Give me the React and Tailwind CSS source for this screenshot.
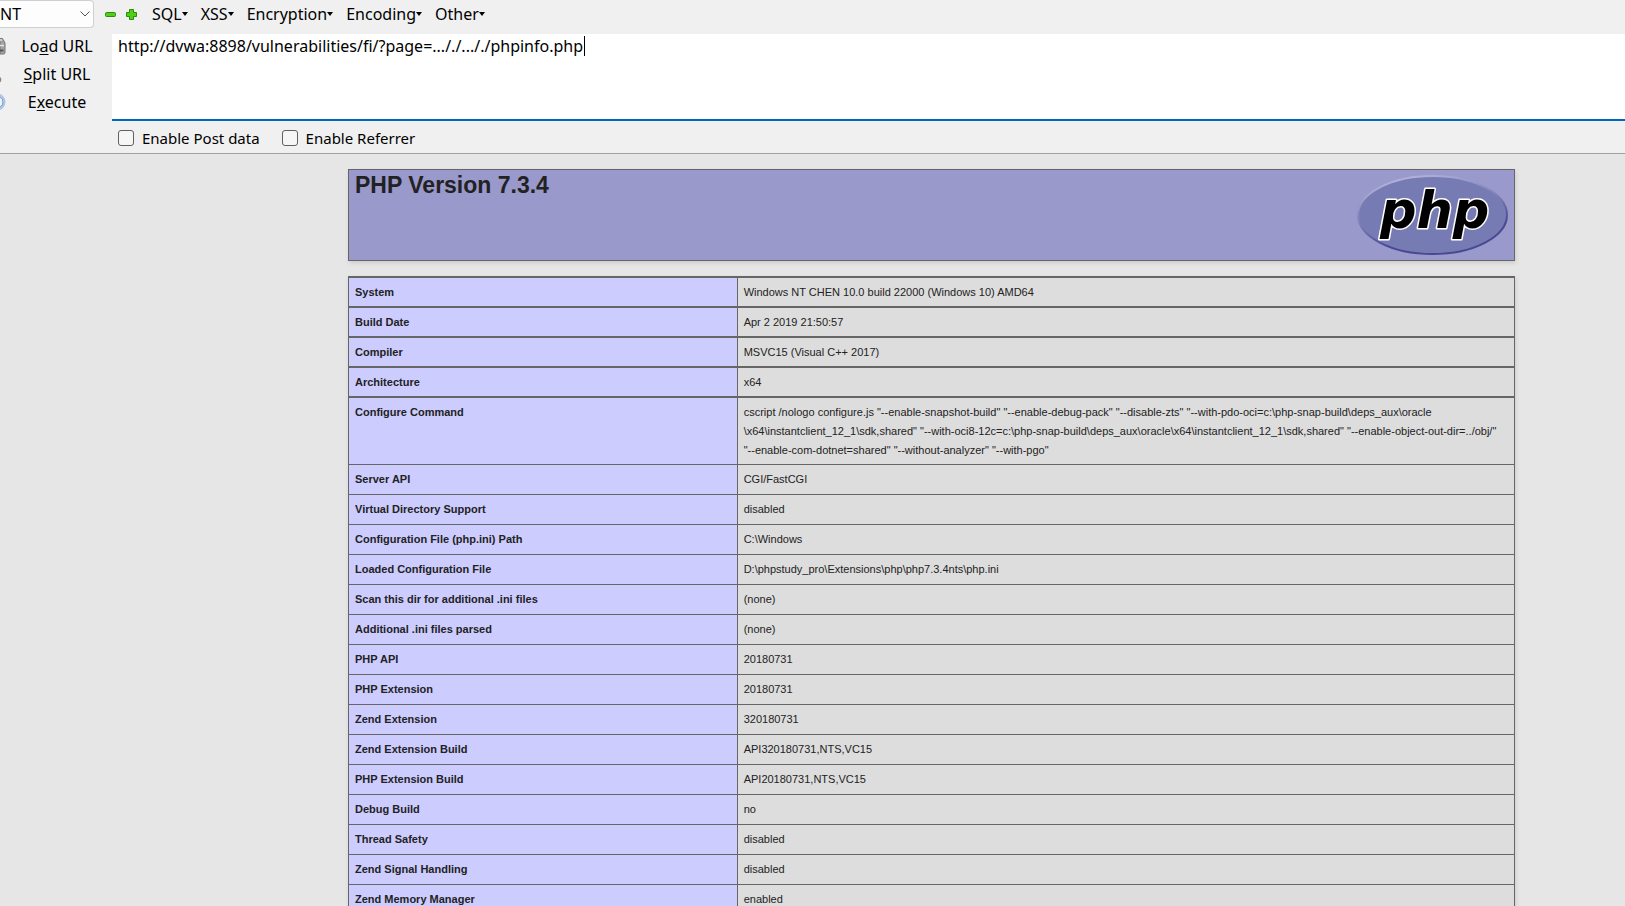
import clsx from "clsx";

const menus = ["SQL", "XSS", "Encryption", "Encoding", "Other"];

const rows = [
  ["System", "Windows NT CHEN 10.0 build 22000 (Windows 10) AMD64"],
  ["Build Date", "Apr 2 2019 21:50:57"],
  ["Compiler", "MSVC15 (Visual C++ 2017)"],
  ["Architecture", "x64"],
  [
    "Configure Command",
    'cscript /nologo configure.js "--enable-snapshot-build" "--enable-debug-pack" "--disable-zts" "--with-pdo-oci=c:\\php-snap-build\\deps_aux\\oracle\n\\x64\\instantclient_12_1\\sdk,shared" "--with-oci8-12c=c:\\php-snap-build\\deps_aux\\oracle\\x64\\instantclient_12_1\\sdk,shared" "--enable-object-out-dir=../obj/"\n"--enable-com-dotnet=shared" "--without-analyzer" "--with-pgo"',
  ],
  ["Server API", "CGI/FastCGI"],
  ["Virtual Directory Support", "disabled"],
  ["Configuration File (php.ini) Path", "C:\\Windows"],
  ["Loaded Configuration File", "D:\\phpstudy_pro\\Extensions\\php\\php7.3.4nts\\php.ini"],
  ["Scan this dir for additional .ini files", "(none)"],
  ["Additional .ini files parsed", "(none)"],
  ["PHP API", "20180731"],
  ["PHP Extension", "20180731"],
  ["Zend Extension", "320180731"],
  ["Zend Extension Build", "API320180731,NTS,VC15"],
  ["PHP Extension Build", "API20180731,NTS,VC15"],
  ["Debug Build", "no"],
  ["Thread Safety", "disabled"],
  ["Zend Signal Handling", "disabled"],
  ["Zend Memory Manager", "enabled"],
];

function PhpLogo() {
  return (
    <svg width="151" height="80" viewBox="0 0 151 80" role="img" aria-label="PHP logo" className="shrink-0">
      <defs>
        <linearGradient id="rim" x1="0.3" y1="0" x2="0.7" y2="1">
          <stop offset="0" stopColor="#b4b4dc" />
          <stop offset="0.45" stopColor="#7a7db5" />
          <stop offset="0.75" stopColor="#484893" />
        </linearGradient>
      </defs>
      <ellipse cx="75.5" cy="40" rx="74.5" ry="39" fill="#777bb3" stroke="url(#rim)" strokeWidth="2" />
      <text
        x="23"
        y="53"
        fontFamily="DejaVu Sans, sans-serif"
        fontWeight="bold"
        fontStyle="italic"
        fontSize="51"
        fill="#000"
        stroke="#fff"
        strokeWidth="3"
        strokeLinejoin="round"
        paintOrder="stroke"
      >
        php
      </text>
    </svg>
  );
}

function ActionButton({ icon, before, hotkey, after }) {
  return (
    <button className="flex h-7 w-28 items-center">
      <span className="w-3 shrink-0">{icon}</span>
      <span className="flex-1 pr-[10px] text-center">
        {before}
        <u className="underline-offset-2">{hotkey}</u>
        {after}
      </span>
    </button>
  );
}

function HackBar() {
  return (
    <header className="border-b border-[#a0a0a0] bg-[#f0f0f0] font-['Noto_Sans',sans-serif] text-[16px] leading-6 text-black">
      <div className="flex h-8 items-start">
        <div className="relative">
          <select aria-label="Toolbar type" className="h-7 w-[94px] appearance-none rounded-r-sm border border-l-0 border-[#d0d0d0] bg-[#fdfdfd]">
            <option>NT</option>
          </select>
          <svg width="10" height="6" viewBox="0 0 10 6" className="pointer-events-none absolute top-[11px] right-1" fill="none" stroke="#555">
            <path d="M.5.5 5 5 9.5.5" />
          </svg>
        </div>
        <div className="flex h-7 items-center gap-2 pl-[10px]">
          <button aria-label="Remove">
            <svg width="13" height="13" viewBox="0 0 13 13">
              <rect x="1.5" y="4.5" width="10" height="4" rx="1" fill="#4fd015" stroke="#2c8a10" />
            </svg>
          </button>
          <button aria-label="Add">
            <svg width="13" height="13" viewBox="0 0 13 13">
              <path d="M4.5 1.5h4v3h3v4h-3v3h-4v-3h-3v-4h3z" fill="#4fd015" stroke="#2c8a10" strokeLinejoin="round" />
            </svg>
          </button>
        </div>
        <nav className="flex h-7 items-center gap-[13px] pl-[14px]">
          {menus.map((menu) => (
            <button key={menu} className="flex items-center">
              {menu}
              <svg width="6" height="4" viewBox="0 0 6 4">
                <path d="M0 0h6L3 4z" />
              </svg>
            </button>
          ))}
        </nav>
      </div>
      <div className="flex">
        <div className="flex flex-col">
          <ActionButton
            before="Lo"
            hotkey="a"
            after="d URL"
            icon={
              <svg width="6" height="18" viewBox="0 0 6 18">
                <path d="M0 1.5h2.5L5 6v9.5q0 1.5-1.5 1.5H0z" fill="#a3a3a3" stroke="#777" />
                <path d="M0 3h2M0 8.5h4" stroke="#e4e4e4" strokeWidth="1.5" />
                <path d="M0 13.5h3.5" stroke="#555" strokeWidth="2" />
              </svg>
            }
          />
          <ActionButton
            hotkey="S"
            after="plit URL"
            icon={
              <svg width="6" height="18" viewBox="0 0 6 18">
                <path d="M0 12.5q1.5 1 .5 4H0z" fill="#555" stroke="#888" />
              </svg>
            }
          />
          <ActionButton
            before="E"
            hotkey="x"
            after="ecute"
            icon={
              <svg width="6" height="18" viewBox="0 0 6 18">
                <circle cx="-3" cy="9" r="7.5" fill="#eaf4ff" stroke="#a8c6ea" strokeWidth="2" />
                <circle cx="-3" cy="9" r="6" fill="none" stroke="#6f8fb5" />
              </svg>
            }
          />
        </div>
        <div className="flex-1 pt-[2px]">
          <div className="relative">
            <textarea
              aria-label="URL"
              spellCheck="false"
              defaultValue="http://dvwa:8898/vulnerabilities/fi/?page=..././..././phpinfo.php"
              className="block h-[87px] w-full resize-none border-b-2 border-[#0067c0] bg-white px-[6px] outline-none"
            />
            <span className="absolute top-[2px] left-[472px] h-5 w-px bg-black" />
          </div>
          <div className="flex h-8 items-center gap-[22px] pt-[2px] pl-[6px] text-[15px]">
            {["Enable Post data", "Enable Referrer"].map((label) => (
              <label key={label} className="flex items-center gap-2">
                <input type="checkbox" className="size-4 appearance-none rounded-[3px] border border-[#606060] bg-[#f6f6f6]" />
                {label}
              </label>
            ))}
          </div>
        </div>
      </div>
    </header>
  );
}

export default function App() {
  return (
    <div className="h-screen overflow-hidden bg-[#e6e6e6]">
      <HackBar />
      <main className="pt-[15px] pr-[110px] pl-[348px] font-['Liberation_Sans',sans-serif] text-[#222]">
        <div className="flex items-start justify-between border border-[#666] bg-[#9999cc] px-[6px] py-[5px] shadow-[1px_2px_4px_#ccc]">
          <h1 className="text-[23px] leading-5 font-bold">PHP Version 7.3.4</h1>
          <PhpLogo />
        </div>
        <table className="mt-[15px] w-full table-fixed border-separate border-spacing-0 border-r border-[#666] text-[11px] leading-[19px] shadow-[1px_2px_4px_#ccc]">
          <tbody>
            {rows.map(([name, value], i) => {
              const cell = clsx(
                "border-l border-[#666] px-[6px] pt-[5px] text-left align-top",
                i < 5 ? "border-t-2 pb-1" : "border-t pb-[5px]"
              );
              return (
                <tr key={name}>
                  <th scope="row" className={clsx(cell, "w-1/3 bg-[#ccccff] font-bold")}>
                    {name}
                  </th>
                  <td className={clsx(cell, "bg-[#dddddd] whitespace-pre-line")}>{value}</td>
                </tr>
              );
            })}
          </tbody>
        </table>
      </main>
    </div>
  );
}
